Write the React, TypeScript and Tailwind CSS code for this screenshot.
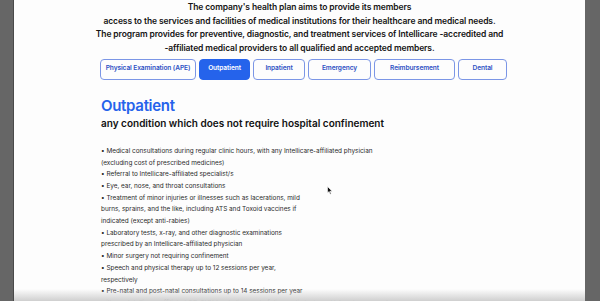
import React from "react";

const tabs = [
  { t: "Physical Examination (APE)", w: "w-[96px]" },
  { t: "Outpatient", w: "w-[51px]" },
  { t: "Inpatient", w: "w-[52px]" },
  { t: "Emergency", w: "w-[63px]" },
  { t: "Reimbursement", w: "w-[81px]" },
  { t: "Dental", w: "w-[49px]" },
];

const lines = [
  "• Medical consultations during regular clinic hours, with any Intellicare-affiliated physician",
  "(excluding cost of prescribed medicines)",
  "• Referral to Intellicare-affiliated specialist/s",
  "• Eye, ear, nose, and throat consultations",
  "• Treatment of minor injuries or illnesses such as lacerations, mild",
  "burns, sprains, and the like, including ATS and Toxoid vaccines if",
  "indicated (except anti-rabies)",
  "• Laboratory tests, x-ray, and other diagnostic examinations",
  "prescribed by an Intellicare-affiliated physician",
  "• Minor surgery not requiring confinement",
  "• Speech and physical therapy up to 12 sessions per year,",
  "respectively",
  "• Pre-natal and post-natal consultations up to 14 sessions per year",
  "with any Intellicare-affiliated OB-GYN (excluding cost of diagnostic tests and laboratory exams)",
];

export default function App() {
  return (
    <div
      className="w-[600px] h-[301px] bg-[#666666] flex overflow-hidden"
      style={{ fontFamily: "Inter, 'Noto Sans', sans-serif" }}
    >
      <div className="w-[14px] shrink-0 border-r border-[#4a4a4a]" />
      <div className="relative flex-1 bg-[#fdfdfd] mr-[15px] overflow-hidden">
        <div className="flex flex-col items-center text-[8.5px] leading-[13.7px] font-semibold text-[#141414] tracking-[-0.1px] pt-[1px]">
          <p>The company's health plan aims to provide its members</p>
          <p>access to the services and facilities of medical institutions for their healthcare and medical needs.</p>
          <p>The program provides for preventive, diagnostic, and treatment services of Intellicare -accredited and</p>
          <p>-affiliated medical providers to all qualified and accepted members.</p>
        </div>
        <div className="flex gap-[3px] mt-[3px] pl-[86px]">
          {tabs.map(({ t, w }) => (
            <div
              key={t}
              className={
                t === "Outpatient"
                  ? `${w} h-[21px] flex items-center justify-center rounded-[4px] bg-[#2563eb] border border-[#2563eb] text-white text-[6.6px] font-semibold tracking-[-0.1px]`
                  : `${w} h-[21px] flex items-center justify-center rounded-[4px] border border-[#7b96e6] text-[#2f52c4] text-[6.6px] font-semibold tracking-[-0.1px]`
              }
            >
              {t}
            </div>
          ))}
        </div>
        <div className="pl-[87px] mt-[16px]">
          <h2 className="text-[15px] leading-[19px] font-semibold text-[#2563eb] tracking-[-0.3px]">Outpatient</h2>
          <p className="text-[10px] leading-[14px] font-semibold text-[#111] mt-[1px]">
            any condition which does not require hospital confinement
          </p>
          <div className="mt-[16px] text-[6.4px] leading-[11.7px] text-[#2a2a2a]">
            {lines.map((l, i) => (
              <p key={i}>{l}</p>
            ))}
          </div>
        </div>
        <div className="absolute left-0 right-0 bottom-0 h-[12px] bg-gradient-to-b from-[#fdfdfd00] to-[#cfcfcf]" />
        <svg className="absolute left-[313px] top-[186px]" width="6" height="9" viewBox="0 0 6 9">
          <path d="M0.5 0.5 L0.5 7 L2 5.5 L3.2 8.2 L4.2 7.8 L3 5.2 L5.2 5.2 Z" fill="#111" stroke="#fff" strokeWidth="0.6" />
        </svg>
      </div>
    </div>
  );
}
